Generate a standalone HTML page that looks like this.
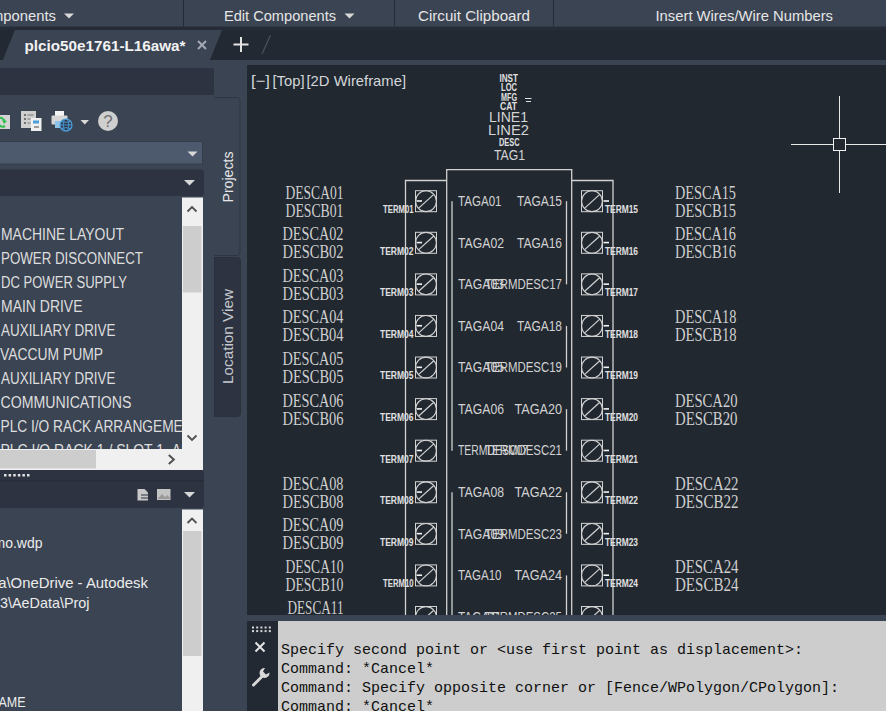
<!DOCTYPE html>
<html lang="en"><head><meta charset="utf-8"><title>AutoCAD Electrical - plcio50e1761-L16awa</title>
<style>
html,body{margin:0;padding:0;}
body{width:886px;height:711px;overflow:hidden;background:#3b4453;position:relative;font-family:"Liberation Sans", sans-serif;}
.abs{position:absolute;}
svg{position:absolute;left:0;top:0;display:block;}
svg text{font-family:"Liberation Sans", sans-serif;white-space:pre;}
svg .serif text{font-family:"Liberation Serif", serif;}
svg .mono text{font-family:"Liberation Mono", monospace;}
.ribbon{left:0;top:0;width:886px;height:27px;background:#3b4453;}
.ribbon .sep{position:absolute;top:0;width:1px;height:26px;background:#252b36;}
.ribline{left:0;top:26px;width:886px;height:4px;background:linear-gradient(#303846 0,#303846 1px,#252c37 1px,#252c37 4px);}
.tabs{left:0;top:30px;width:886px;height:30px;background:#222933;}
.palette{left:0;top:60px;width:247px;height:651px;background:#3b4453;}
.viewport{left:247px;top:65px;width:639px;height:550px;background:#212830;overflow:hidden;}
.cmd{left:247px;top:621px;width:639px;height:90px;background:#222933;}
.cmd .hist{position:absolute;left:31px;top:0;width:608px;height:90px;background:#cdcdcd;}
</style></head><body>

<div class="abs ribbon">
<div class="sep" style="left:183px"></div>
<div class="sep" style="left:394px"></div>
<div class="sep" style="left:553px"></div>
<svg width="886" height="27" viewBox="0 0 886 27"><text x="-69" y="21" font-size="15" fill="#e6e6e6" font-weight="normal" textLength="125" lengthAdjust="spacingAndGlyphs" >Insert Components</text><text x="224" y="21" font-size="15" fill="#e6e6e6" font-weight="normal" textLength="112" lengthAdjust="spacingAndGlyphs" >Edit Components</text><text x="418" y="21" font-size="15" fill="#e6e6e6" font-weight="normal" textLength="112" lengthAdjust="spacingAndGlyphs" >Circuit Clipboard</text><text x="655.5" y="21" font-size="15" fill="#e6e6e6" font-weight="normal" textLength="177.5" lengthAdjust="spacingAndGlyphs" >Insert Wires/Wire Numbers</text><path d="M64 13.5h10l-5 5z" fill="#d8d8d8"/><path d="M344.5 13.5h10l-5 5z" fill="#d8d8d8"/></svg>
</div>
<div class="abs ribline"></div>
<div class="abs tabs">
<svg width="886" height="30" viewBox="0 30 886 30"><polygon points="15,30 222,30 210,60 2.800,60" fill="#3b4453"/><text x="24.5" y="51" font-size="15" fill="#f2f2f2" font-weight="bold" textLength="161" lengthAdjust="spacingAndGlyphs" >plcio50e1761-L16awa*</text><path d="M198 41l8 8M206 41l-8 8" stroke="#a4a9b3" stroke-width="2" fill="none"/><path d="M233.5 44.5h15M241 37v15" stroke="#e4e4e4" stroke-width="2" fill="none"/><path d="M270.5 35L262 54" stroke="#4a5261" stroke-width="1.2" fill="none"/></svg>
</div>
<div class="abs palette">
<svg width="247" height="651" viewBox="0 60 247 651"><path d="M0 68h211a3 3 0 0 1 3 3v24h-214z" fill="#2d3340"/><path d="M214 97.5h23a3 3 0 0 1 3 3v152a3 3 0 0 1 -3 3h-23" fill="#3b4453" stroke="#2f3643" stroke-width="1"/><path d="M214.5 257.5h23a3 3 0 0 1 3 3v153a3 3 0 0 1 -3 3h-23z" fill="#2d3340" stroke="#2a303c" stroke-width="1"/><text transform="translate(232.5,202.5) rotate(-90)" font-size="14.5" fill="#e6e6e6" textLength="51" lengthAdjust="spacingAndGlyphs">Projects</text><text transform="translate(232.5,384) rotate(-90)" font-size="14.5" fill="#c6c9cf" textLength="95" lengthAdjust="spacingAndGlyphs">Location View</text><rect x="-6" y="115" width="16" height="14" fill="#d4d4d4"/><path d="M-1 118a5 5 0 0 1 6 4M5 126a5 5 0 0 1 -6 -1" stroke="#2fbf4f" stroke-width="2" fill="none"/><path d="M2 120l5 1-3 3z" fill="#2fbf4f"/><rect x="21" y="111" width="15" height="17" fill="#cfcfcf"/><path d="M24 115h2M24 119h2M24 123h2" stroke="#555" stroke-width="1.6"/><path d="M27.5 115h6M27.5 119h3M27.5 123h3" stroke="#777" stroke-width="1"/><rect x="31" y="118" width="10.5" height="13" fill="#f0f0f0"/><rect x="33" y="120.5" width="6" height="3" fill="#4d9fdc"/><path d="M34 127h5" stroke="#777" stroke-width="1.4"/><rect x="55" y="111" width="9" height="6" fill="#f4f4f4"/><rect x="51.5" y="115.500" width="16" height="9" rx="1" fill="#d6d6d6"/><rect x="55" y="121" width="8" height="7" fill="#8ec3ea"/><circle cx="66" cy="125" r="6" fill="#2c3a4e" stroke="#4d9fdc" stroke-width="1.2"/><path d="M60 125h12M61.500 121.500q4.500 1.800 9 0M61.500 128.500q4.500 -1.800 9 0" stroke="#4d9fdc" stroke-width="0.9" fill="none"/><ellipse cx="66" cy="125" rx="2.800" ry="6" fill="none" stroke="#4d9fdc" stroke-width="0.9"/><path d="M80.500 120h8.500l-4.250 4.500z" fill="#d8d8d8"/><circle cx="108" cy="121" r="10" fill="#cfcfcf"/><text x="108" y="127" font-size="17" fill="#707070" text-anchor="middle">?</text><rect x="-2" y="141.500" width="204.500" height="22.500" fill="#4d5a6e" stroke="#343c4a" stroke-width="1"/><path d="M187.5 151.500h10l-5 5z" fill="#d8d8d8"/><path d="M0 169.500h201a3 3 0 0 1 3 3v20.500a3 3 0 0 1 -3 3h-201z" fill="#2d3340"/><path d="M184 180h11l-5.500 5.500z" fill="#d8d8d8"/><rect x="182" y="197.500" width="21" height="272.500" fill="#f0f0f0"/><rect x="183" y="226" width="18.500" height="66.500" fill="#cdcdcd"/><path d="M187.5 211.500l4.500-4.500 4.500 4.500" stroke="#505050" stroke-width="1.8" fill="none"/><path d="M187.5 435.500l4.500 4.500 4.500-4.500" stroke="#505050" stroke-width="1.8" fill="none"/><rect x="0" y="449" width="182" height="21" fill="#f0f0f0"/><rect x="0" y="450" width="96" height="18.500" fill="#cdcdcd"/><path d="M168.800 455l5 4.500-5 4.500" stroke="#505050" stroke-width="2" fill="none"/><clipPath id="cl1"><rect x="0" y="197" width="182" height="252"/></clipPath><g clip-path="url(#cl1)"><text x="1" y="239.6" font-size="15.6" fill="#dedede" font-weight="normal" textLength="123" lengthAdjust="spacingAndGlyphs" >MACHINE LAYOUT</text><text x="1" y="263.6" font-size="15.6" fill="#dedede" font-weight="normal" textLength="142" lengthAdjust="spacingAndGlyphs" >POWER DISCONNECT</text><text x="1" y="287.6" font-size="15.6" fill="#dedede" font-weight="normal" textLength="126" lengthAdjust="spacingAndGlyphs" >DC POWER SUPPLY</text><text x="1" y="311.6" font-size="15.6" fill="#dedede" font-weight="normal" textLength="81.5" lengthAdjust="spacingAndGlyphs" >MAIN DRIVE</text><text x="1" y="335.6" font-size="15.6" fill="#dedede" font-weight="normal" textLength="114.5" lengthAdjust="spacingAndGlyphs" >AUXILIARY DRIVE</text><text x="0" y="359.6" font-size="15.6" fill="#dedede" font-weight="normal" textLength="103" lengthAdjust="spacingAndGlyphs" >VACCUM PUMP</text><text x="1" y="383.6" font-size="15.6" fill="#dedede" font-weight="normal" textLength="114.5" lengthAdjust="spacingAndGlyphs" >AUXILIARY DRIVE</text><text x="0.5" y="407.6" font-size="15.6" fill="#dedede" font-weight="normal" textLength="131" lengthAdjust="spacingAndGlyphs" >COMMUNICATIONS</text><text x="0.5" y="431.6" font-size="15.6" fill="#dedede" font-weight="normal" textLength="200.5" lengthAdjust="spacingAndGlyphs" >PLC I/O RACK ARRANGEMENT</text><text x="0.5" y="455.6" font-size="15.6" fill="#dedede" font-weight="normal" textLength="229.5" lengthAdjust="spacingAndGlyphs" >PLC I/O RACK 1 / SLOT 1- ANALOG</text></g><path d="M0 470h201a3 3 0 0 1 3 3v32a3 3 0 0 1 -3 3h-201z" fill="#2d3340"/><rect x="0" y="480.300" width="204" height="1.200" fill="#262c37"/><rect x="4" y="474" width="2.500" height="2.500" fill="#e4e4e4"/><rect x="8.6" y="474" width="2.500" height="2.500" fill="#e4e4e4"/><rect x="13.2" y="474" width="2.500" height="2.500" fill="#e4e4e4"/><rect x="17.8" y="474" width="2.500" height="2.500" fill="#e4e4e4"/><rect x="22.4" y="474" width="2.500" height="2.500" fill="#e4e4e4"/><rect x="27" y="474" width="2.500" height="2.500" fill="#e4e4e4"/><path d="M137.500 489h7l3.500 3.500v8h-10.500z" fill="#c8c8c8"/><path d="M141 495h7M141 498h7" stroke="#2d3340" stroke-width="1"/><rect x="157" y="489" width="13.500" height="11" fill="#c4c4c4"/><path d="M157.500 499l4.500-5 3 3 2.500-2 3 4z" fill="#9a9a9a"/><path d="M184 492h11l-5.500 5.500z" fill="#d8d8d8"/><rect x="182" y="509.500" width="21" height="202" fill="#f0f0f0"/><rect x="183" y="531" width="18.500" height="125" fill="#cdcdcd"/><path d="M187.5 523l4.500-4.500 4.500 4.500" stroke="#505050" stroke-width="1.8" fill="none"/><clipPath id="cl2"><rect x="0" y="509" width="182" height="202"/></clipPath><g clip-path="url(#cl2)"><text x="-22" y="548" font-size="15" fill="#ececec" font-weight="normal" textLength="64.5" lengthAdjust="spacingAndGlyphs" >demo.wdp</text><text x="-25" y="587.5" font-size="15" fill="#ececec" font-weight="normal" textLength="173" lengthAdjust="spacingAndGlyphs" >Data\OneDrive - Autodesk</text><text x="-24" y="607.5" font-size="15" fill="#ececec" font-weight="normal" textLength="113.5" lengthAdjust="spacingAndGlyphs" >2023\AeData\Proj</text><text x="-37" y="707" font-size="15" fill="#ececec" font-weight="normal" textLength="62.5" lengthAdjust="spacingAndGlyphs" >FILENAME</text></g></svg>
</div>
<div class="abs viewport">
<svg width="639" height="550" viewBox="247 65 639 550"><text x="251" y="86" font-size="15" fill="#d4d6da" font-weight="normal" textLength="19" lengthAdjust="spacingAndGlyphs" >[−]</text><text x="272.5" y="86" font-size="15" fill="#d4d6da" font-weight="normal" textLength="32" lengthAdjust="spacingAndGlyphs" >[Top]</text><text x="306.5" y="86" font-size="15" fill="#d4d6da" font-weight="normal" textLength="99.5" lengthAdjust="spacingAndGlyphs" >[2D Wireframe]</text><path d="M839.5 96v97M791 144.500h96" stroke="#e8e8e8" stroke-width="1" fill="none"/><rect x="833.500" y="138.500" width="12" height="12" fill="#212830" stroke="#f0f0f0" stroke-width="1"/><g><text x="499.5" y="82" font-size="10.8" fill="#e0e0e0" font-weight="bold" textLength="18.5" lengthAdjust="spacingAndGlyphs" >INST</text><text x="501" y="90.5" font-size="10.8" fill="#e0e0e0" font-weight="bold" textLength="16" lengthAdjust="spacingAndGlyphs" >LOC</text><text x="501" y="101" font-size="10.8" fill="#e0e0e0" font-weight="bold" textLength="16" lengthAdjust="spacingAndGlyphs" >MFG</text><text x="500" y="110" font-size="10.8" fill="#e0e0e0" font-weight="bold" textLength="17" lengthAdjust="spacingAndGlyphs" >CAT</text><path d="M525 98.500h6.500M526 101.500h5" stroke="#e0e0e0" stroke-width="1"/><text x="489" y="122" font-size="14" fill="#d4d4d4" font-weight="normal" textLength="39" lengthAdjust="spacingAndGlyphs" >LINE1</text><text x="488" y="134.5" font-size="14" fill="#d4d4d4" font-weight="normal" textLength="41" lengthAdjust="spacingAndGlyphs" >LINE2</text><text x="499" y="145.5" font-size="10.8" fill="#e0e0e0" font-weight="bold" textLength="20.5" lengthAdjust="spacingAndGlyphs" >DESC</text><text x="494" y="159.5" font-size="14.5" fill="#d4d4d4" font-weight="normal" textLength="31" lengthAdjust="spacingAndGlyphs" >TAG1</text></g><path d="M446.700 620V169.700h125V620" stroke="#d2d2d2" stroke-width="1.300" fill="none"/><path d="M405.500 620V180.500h41M571.500 180.500h41.500V620" stroke="#d2d2d2" stroke-width="1.300" fill="none"/><path d="M452 201.20V450.68" stroke="#d2d2d2" stroke-width="1.300"/><path d="M452 492.26V625.32" stroke="#d2d2d2" stroke-width="1.300"/><path d="M566.500 201.20V284.36" stroke="#d2d2d2" stroke-width="1.300"/><path d="M566.500 325.94V367.52" stroke="#d2d2d2" stroke-width="1.300"/><path d="M566.500 409.10V450.68" stroke="#d2d2d2" stroke-width="1.300"/><path d="M566.500 492.26V533.84" stroke="#d2d2d2" stroke-width="1.300"/><path d="M566.500 575.42V625.32" stroke="#d2d2d2" stroke-width="1.300"/><rect x="415.5" y="190.7" width="21" height="21" fill="none" stroke="#d2d2d2" stroke-width="1"/><circle cx="426" cy="201.2" r="10.400" fill="none" stroke="#d2d2d2" stroke-width="1.1"/><path d="M418.7 208.1L433.8 194.4" stroke="#d2d2d2" stroke-width="1.2"/><path d="M416.5 201h5.500" stroke="#f4f4f4" stroke-width="1.600"/><rect x="581.5" y="190.7" width="21" height="21" fill="none" stroke="#d2d2d2" stroke-width="1"/><circle cx="592" cy="201.2" r="10.400" fill="none" stroke="#d2d2d2" stroke-width="1.1"/><path d="M584.7 208.1L599.8 194.4" stroke="#d2d2d2" stroke-width="1.2"/><path d="M603.5 201h5.500" stroke="#f4f4f4" stroke-width="1.600"/><rect x="415.5" y="232.28" width="21" height="21" fill="none" stroke="#d2d2d2" stroke-width="1"/><circle cx="426" cy="242.78" r="10.400" fill="none" stroke="#d2d2d2" stroke-width="1.1"/><path d="M418.7 249.68L433.8 235.98" stroke="#d2d2d2" stroke-width="1.2"/><path d="M416.5 242.58h5.500" stroke="#f4f4f4" stroke-width="1.600"/><rect x="581.5" y="232.28" width="21" height="21" fill="none" stroke="#d2d2d2" stroke-width="1"/><circle cx="592" cy="242.78" r="10.400" fill="none" stroke="#d2d2d2" stroke-width="1.1"/><path d="M584.7 249.68L599.8 235.98" stroke="#d2d2d2" stroke-width="1.2"/><path d="M603.5 242.58h5.500" stroke="#f4f4f4" stroke-width="1.600"/><rect x="415.5" y="273.86" width="21" height="21" fill="none" stroke="#d2d2d2" stroke-width="1"/><circle cx="426" cy="284.36" r="10.400" fill="none" stroke="#d2d2d2" stroke-width="1.1"/><path d="M418.7 291.26L433.8 277.56" stroke="#d2d2d2" stroke-width="1.2"/><path d="M416.5 284.16h5.500" stroke="#f4f4f4" stroke-width="1.600"/><rect x="581.5" y="273.86" width="21" height="21" fill="none" stroke="#d2d2d2" stroke-width="1"/><circle cx="592" cy="284.36" r="10.400" fill="none" stroke="#d2d2d2" stroke-width="1.1"/><path d="M584.7 291.26L599.8 277.56" stroke="#d2d2d2" stroke-width="1.2"/><path d="M603.5 284.16h5.500" stroke="#f4f4f4" stroke-width="1.600"/><rect x="415.5" y="315.44" width="21" height="21" fill="none" stroke="#d2d2d2" stroke-width="1"/><circle cx="426" cy="325.94" r="10.400" fill="none" stroke="#d2d2d2" stroke-width="1.1"/><path d="M418.7 332.84L433.8 319.14" stroke="#d2d2d2" stroke-width="1.2"/><path d="M416.5 325.74h5.500" stroke="#f4f4f4" stroke-width="1.600"/><rect x="581.5" y="315.44" width="21" height="21" fill="none" stroke="#d2d2d2" stroke-width="1"/><circle cx="592" cy="325.94" r="10.400" fill="none" stroke="#d2d2d2" stroke-width="1.1"/><path d="M584.7 332.84L599.8 319.14" stroke="#d2d2d2" stroke-width="1.2"/><path d="M603.5 325.74h5.500" stroke="#f4f4f4" stroke-width="1.600"/><rect x="415.5" y="357.02" width="21" height="21" fill="none" stroke="#d2d2d2" stroke-width="1"/><circle cx="426" cy="367.52" r="10.400" fill="none" stroke="#d2d2d2" stroke-width="1.1"/><path d="M418.7 374.42L433.8 360.72" stroke="#d2d2d2" stroke-width="1.2"/><path d="M416.5 367.32h5.500" stroke="#f4f4f4" stroke-width="1.600"/><rect x="581.5" y="357.02" width="21" height="21" fill="none" stroke="#d2d2d2" stroke-width="1"/><circle cx="592" cy="367.52" r="10.400" fill="none" stroke="#d2d2d2" stroke-width="1.1"/><path d="M584.7 374.42L599.8 360.72" stroke="#d2d2d2" stroke-width="1.2"/><path d="M603.5 367.32h5.500" stroke="#f4f4f4" stroke-width="1.600"/><rect x="415.5" y="398.6" width="21" height="21" fill="none" stroke="#d2d2d2" stroke-width="1"/><circle cx="426" cy="409.1" r="10.400" fill="none" stroke="#d2d2d2" stroke-width="1.1"/><path d="M418.7 416L433.8 402.3" stroke="#d2d2d2" stroke-width="1.2"/><path d="M416.5 408.9h5.500" stroke="#f4f4f4" stroke-width="1.600"/><rect x="581.5" y="398.6" width="21" height="21" fill="none" stroke="#d2d2d2" stroke-width="1"/><circle cx="592" cy="409.1" r="10.400" fill="none" stroke="#d2d2d2" stroke-width="1.1"/><path d="M584.7 416L599.8 402.3" stroke="#d2d2d2" stroke-width="1.2"/><path d="M603.5 408.9h5.500" stroke="#f4f4f4" stroke-width="1.600"/><rect x="415.5" y="440.18" width="21" height="21" fill="none" stroke="#d2d2d2" stroke-width="1"/><circle cx="426" cy="450.68" r="10.400" fill="none" stroke="#d2d2d2" stroke-width="1.1"/><path d="M418.7 457.58L433.8 443.88" stroke="#d2d2d2" stroke-width="1.2"/><path d="M416.5 450.48h5.500" stroke="#f4f4f4" stroke-width="1.600"/><rect x="581.5" y="440.18" width="21" height="21" fill="none" stroke="#d2d2d2" stroke-width="1"/><circle cx="592" cy="450.68" r="10.400" fill="none" stroke="#d2d2d2" stroke-width="1.1"/><path d="M584.7 457.58L599.8 443.88" stroke="#d2d2d2" stroke-width="1.2"/><path d="M603.5 450.48h5.500" stroke="#f4f4f4" stroke-width="1.600"/><rect x="415.5" y="481.76" width="21" height="21" fill="none" stroke="#d2d2d2" stroke-width="1"/><circle cx="426" cy="492.26" r="10.400" fill="none" stroke="#d2d2d2" stroke-width="1.1"/><path d="M418.7 499.16L433.8 485.46" stroke="#d2d2d2" stroke-width="1.2"/><path d="M416.5 492.06h5.500" stroke="#f4f4f4" stroke-width="1.600"/><rect x="581.5" y="481.76" width="21" height="21" fill="none" stroke="#d2d2d2" stroke-width="1"/><circle cx="592" cy="492.26" r="10.400" fill="none" stroke="#d2d2d2" stroke-width="1.1"/><path d="M584.7 499.16L599.8 485.46" stroke="#d2d2d2" stroke-width="1.2"/><path d="M603.5 492.06h5.500" stroke="#f4f4f4" stroke-width="1.600"/><rect x="415.5" y="523.34" width="21" height="21" fill="none" stroke="#d2d2d2" stroke-width="1"/><circle cx="426" cy="533.84" r="10.400" fill="none" stroke="#d2d2d2" stroke-width="1.1"/><path d="M418.7 540.74L433.8 527.04" stroke="#d2d2d2" stroke-width="1.2"/><path d="M416.5 533.64h5.500" stroke="#f4f4f4" stroke-width="1.600"/><rect x="581.5" y="523.34" width="21" height="21" fill="none" stroke="#d2d2d2" stroke-width="1"/><circle cx="592" cy="533.84" r="10.400" fill="none" stroke="#d2d2d2" stroke-width="1.1"/><path d="M584.7 540.74L599.8 527.04" stroke="#d2d2d2" stroke-width="1.2"/><path d="M603.5 533.64h5.500" stroke="#f4f4f4" stroke-width="1.600"/><rect x="415.5" y="564.92" width="21" height="21" fill="none" stroke="#d2d2d2" stroke-width="1"/><circle cx="426" cy="575.42" r="10.400" fill="none" stroke="#d2d2d2" stroke-width="1.1"/><path d="M418.7 582.32L433.8 568.62" stroke="#d2d2d2" stroke-width="1.2"/><path d="M416.5 575.22h5.500" stroke="#f4f4f4" stroke-width="1.600"/><rect x="581.5" y="564.92" width="21" height="21" fill="none" stroke="#d2d2d2" stroke-width="1"/><circle cx="592" cy="575.42" r="10.400" fill="none" stroke="#d2d2d2" stroke-width="1.1"/><path d="M584.7 582.32L599.8 568.62" stroke="#d2d2d2" stroke-width="1.2"/><path d="M603.5 575.22h5.500" stroke="#f4f4f4" stroke-width="1.600"/><rect x="415.5" y="606.5" width="21" height="21" fill="none" stroke="#d2d2d2" stroke-width="1"/><circle cx="426" cy="617" r="10.400" fill="none" stroke="#d2d2d2" stroke-width="1.1"/><path d="M418.7 623.9L433.8 610.2" stroke="#d2d2d2" stroke-width="1.2"/><path d="M416.5 616.8h5.500" stroke="#f4f4f4" stroke-width="1.600"/><rect x="581.5" y="606.5" width="21" height="21" fill="none" stroke="#d2d2d2" stroke-width="1"/><circle cx="592" cy="617" r="10.400" fill="none" stroke="#d2d2d2" stroke-width="1.1"/><path d="M584.7 623.9L599.8 610.2" stroke="#d2d2d2" stroke-width="1.2"/><path d="M603.5 616.8h5.500" stroke="#f4f4f4" stroke-width="1.600"/><g><text x="383" y="213.1" font-size="10" fill="#e0e0e0" font-weight="bold" textLength="30.5" lengthAdjust="spacingAndGlyphs" >TERM01</text><text x="605" y="213.1" font-size="10" fill="#e0e0e0" font-weight="bold" textLength="33" lengthAdjust="spacingAndGlyphs" >TERM15</text><text x="380" y="254.68" font-size="10" fill="#e0e0e0" font-weight="bold" textLength="33.5" lengthAdjust="spacingAndGlyphs" >TERM02</text><text x="605" y="254.68" font-size="10" fill="#e0e0e0" font-weight="bold" textLength="33" lengthAdjust="spacingAndGlyphs" >TERM16</text><text x="380" y="296.26" font-size="10" fill="#e0e0e0" font-weight="bold" textLength="33.5" lengthAdjust="spacingAndGlyphs" >TERM03</text><text x="605" y="296.26" font-size="10" fill="#e0e0e0" font-weight="bold" textLength="33" lengthAdjust="spacingAndGlyphs" >TERM17</text><text x="380" y="337.84" font-size="10" fill="#e0e0e0" font-weight="bold" textLength="33.5" lengthAdjust="spacingAndGlyphs" >TERM04</text><text x="605" y="337.84" font-size="10" fill="#e0e0e0" font-weight="bold" textLength="33" lengthAdjust="spacingAndGlyphs" >TERM18</text><text x="380" y="379.42" font-size="10" fill="#e0e0e0" font-weight="bold" textLength="33.5" lengthAdjust="spacingAndGlyphs" >TERM05</text><text x="605" y="379.42" font-size="10" fill="#e0e0e0" font-weight="bold" textLength="33" lengthAdjust="spacingAndGlyphs" >TERM19</text><text x="380" y="421" font-size="10" fill="#e0e0e0" font-weight="bold" textLength="33.5" lengthAdjust="spacingAndGlyphs" >TERM06</text><text x="605" y="421" font-size="10" fill="#e0e0e0" font-weight="bold" textLength="33" lengthAdjust="spacingAndGlyphs" >TERM20</text><text x="380" y="462.58" font-size="10" fill="#e0e0e0" font-weight="bold" textLength="33.5" lengthAdjust="spacingAndGlyphs" >TERM07</text><text x="605" y="462.58" font-size="10" fill="#e0e0e0" font-weight="bold" textLength="33" lengthAdjust="spacingAndGlyphs" >TERM21</text><text x="380" y="504.16" font-size="10" fill="#e0e0e0" font-weight="bold" textLength="33.5" lengthAdjust="spacingAndGlyphs" >TERM08</text><text x="605" y="504.16" font-size="10" fill="#e0e0e0" font-weight="bold" textLength="33" lengthAdjust="spacingAndGlyphs" >TERM22</text><text x="380" y="545.74" font-size="10" fill="#e0e0e0" font-weight="bold" textLength="33.5" lengthAdjust="spacingAndGlyphs" >TERM09</text><text x="605" y="545.74" font-size="10" fill="#e0e0e0" font-weight="bold" textLength="33" lengthAdjust="spacingAndGlyphs" >TERM23</text><text x="383" y="587.32" font-size="10" fill="#e0e0e0" font-weight="bold" textLength="30.5" lengthAdjust="spacingAndGlyphs" >TERM10</text><text x="605" y="587.32" font-size="10" fill="#e0e0e0" font-weight="bold" textLength="33" lengthAdjust="spacingAndGlyphs" >TERM24</text><text x="383" y="628.9" font-size="10" fill="#e0e0e0" font-weight="bold" textLength="30.5" lengthAdjust="spacingAndGlyphs" >TERM11</text><text x="605" y="628.9" font-size="10" fill="#e0e0e0" font-weight="bold" textLength="33" lengthAdjust="spacingAndGlyphs" >TERM25</text></g><text x="458" y="206" font-size="14.2" fill="#d2d2d2" font-weight="normal" textLength="43.5" lengthAdjust="spacingAndGlyphs" >TAGA01</text><text x="517" y="206" font-size="14.2" fill="#d2d2d2" font-weight="normal" textLength="45" lengthAdjust="spacingAndGlyphs" >TAGA15</text><text x="458" y="247.58" font-size="14.2" fill="#d2d2d2" font-weight="normal" textLength="46" lengthAdjust="spacingAndGlyphs" >TAGA02</text><text x="517" y="247.58" font-size="14.2" fill="#d2d2d2" font-weight="normal" textLength="45" lengthAdjust="spacingAndGlyphs" >TAGA16</text><text x="458" y="289.16" font-size="14.2" fill="#d2d2d2" font-weight="normal" textLength="46" lengthAdjust="spacingAndGlyphs" >TAGA03</text><text x="485" y="289.16" font-size="14.2" fill="#d2d2d2" font-weight="normal" textLength="77" lengthAdjust="spacingAndGlyphs" >TERMDESC17</text><text x="458" y="330.74" font-size="14.2" fill="#d2d2d2" font-weight="normal" textLength="46" lengthAdjust="spacingAndGlyphs" >TAGA04</text><text x="517" y="330.74" font-size="14.2" fill="#d2d2d2" font-weight="normal" textLength="45" lengthAdjust="spacingAndGlyphs" >TAGA18</text><text x="458" y="372.32" font-size="14.2" fill="#d2d2d2" font-weight="normal" textLength="46" lengthAdjust="spacingAndGlyphs" >TAGA05</text><text x="485" y="372.32" font-size="14.2" fill="#d2d2d2" font-weight="normal" textLength="77" lengthAdjust="spacingAndGlyphs" >TERMDESC19</text><text x="458" y="413.9" font-size="14.2" fill="#d2d2d2" font-weight="normal" textLength="46" lengthAdjust="spacingAndGlyphs" >TAGA06</text><text x="514.5" y="413.9" font-size="14.2" fill="#d2d2d2" font-weight="normal" textLength="47.5" lengthAdjust="spacingAndGlyphs" >TAGA20</text><text x="458" y="455.48" font-size="14.2" fill="#d2d2d2" font-weight="normal" textLength="70" lengthAdjust="spacingAndGlyphs" >TERMDESC07</text><text x="485" y="455.48" font-size="14.2" fill="#d2d2d2" font-weight="normal" textLength="77" lengthAdjust="spacingAndGlyphs" >TERMDESC21</text><text x="458" y="497.06" font-size="14.2" fill="#d2d2d2" font-weight="normal" textLength="46" lengthAdjust="spacingAndGlyphs" >TAGA08</text><text x="514.5" y="497.06" font-size="14.2" fill="#d2d2d2" font-weight="normal" textLength="47.5" lengthAdjust="spacingAndGlyphs" >TAGA22</text><text x="458" y="538.64" font-size="14.2" fill="#d2d2d2" font-weight="normal" textLength="46" lengthAdjust="spacingAndGlyphs" >TAGA09</text><text x="485" y="538.64" font-size="14.2" fill="#d2d2d2" font-weight="normal" textLength="77" lengthAdjust="spacingAndGlyphs" >TERMDESC23</text><text x="458" y="580.22" font-size="14.2" fill="#d2d2d2" font-weight="normal" textLength="43.5" lengthAdjust="spacingAndGlyphs" >TAGA10</text><text x="514.5" y="580.22" font-size="14.2" fill="#d2d2d2" font-weight="normal" textLength="47.5" lengthAdjust="spacingAndGlyphs" >TAGA24</text><text x="458" y="621.8" font-size="14.2" fill="#d2d2d2" font-weight="normal" textLength="43.5" lengthAdjust="spacingAndGlyphs" >TAGA11</text><text x="485" y="621.8" font-size="14.2" fill="#d2d2d2" font-weight="normal" textLength="77" lengthAdjust="spacingAndGlyphs" >TERMDESC25</text><g class="serif"><text x="285.5" y="199" font-size="18" fill="#cfcfcf" font-weight="normal" textLength="58" lengthAdjust="spacingAndGlyphs" >DESCA01</text><text x="285.5" y="217" font-size="18" fill="#cfcfcf" font-weight="normal" textLength="58" lengthAdjust="spacingAndGlyphs" >DESCB01</text><text x="282.5" y="240" font-size="18" fill="#cfcfcf" font-weight="normal" textLength="61" lengthAdjust="spacingAndGlyphs" >DESCA02</text><text x="282.5" y="258" font-size="18" fill="#cfcfcf" font-weight="normal" textLength="61" lengthAdjust="spacingAndGlyphs" >DESCB02</text><text x="282.5" y="282" font-size="18" fill="#cfcfcf" font-weight="normal" textLength="61" lengthAdjust="spacingAndGlyphs" >DESCA03</text><text x="282.5" y="300" font-size="18" fill="#cfcfcf" font-weight="normal" textLength="61" lengthAdjust="spacingAndGlyphs" >DESCB03</text><text x="282.5" y="323" font-size="18" fill="#cfcfcf" font-weight="normal" textLength="61" lengthAdjust="spacingAndGlyphs" >DESCA04</text><text x="282.5" y="341" font-size="18" fill="#cfcfcf" font-weight="normal" textLength="61" lengthAdjust="spacingAndGlyphs" >DESCB04</text><text x="282.5" y="365" font-size="18" fill="#cfcfcf" font-weight="normal" textLength="61" lengthAdjust="spacingAndGlyphs" >DESCA05</text><text x="282.5" y="383" font-size="18" fill="#cfcfcf" font-weight="normal" textLength="61" lengthAdjust="spacingAndGlyphs" >DESCB05</text><text x="282.5" y="407" font-size="18" fill="#cfcfcf" font-weight="normal" textLength="61" lengthAdjust="spacingAndGlyphs" >DESCA06</text><text x="282.5" y="425" font-size="18" fill="#cfcfcf" font-weight="normal" textLength="61" lengthAdjust="spacingAndGlyphs" >DESCB06</text><text x="282.5" y="490" font-size="18" fill="#cfcfcf" font-weight="normal" textLength="61" lengthAdjust="spacingAndGlyphs" >DESCA08</text><text x="282.5" y="508" font-size="18" fill="#cfcfcf" font-weight="normal" textLength="61" lengthAdjust="spacingAndGlyphs" >DESCB08</text><text x="282.5" y="531" font-size="18" fill="#cfcfcf" font-weight="normal" textLength="61" lengthAdjust="spacingAndGlyphs" >DESCA09</text><text x="282.5" y="549" font-size="18" fill="#cfcfcf" font-weight="normal" textLength="61" lengthAdjust="spacingAndGlyphs" >DESCB09</text><text x="285.5" y="573" font-size="18" fill="#cfcfcf" font-weight="normal" textLength="58" lengthAdjust="spacingAndGlyphs" >DESCA10</text><text x="285.5" y="591" font-size="18" fill="#cfcfcf" font-weight="normal" textLength="58" lengthAdjust="spacingAndGlyphs" >DESCB10</text><text x="287.5" y="614" font-size="18" fill="#cfcfcf" font-weight="normal" textLength="56" lengthAdjust="spacingAndGlyphs" >DESCA11</text><text x="287.5" y="632" font-size="18" fill="#cfcfcf" font-weight="normal" textLength="56" lengthAdjust="spacingAndGlyphs" >DESCB11</text><text x="675" y="199" font-size="18" fill="#cfcfcf" font-weight="normal" textLength="61" lengthAdjust="spacingAndGlyphs" >DESCA15</text><text x="675" y="217" font-size="18" fill="#cfcfcf" font-weight="normal" textLength="61" lengthAdjust="spacingAndGlyphs" >DESCB15</text><text x="675" y="240" font-size="18" fill="#cfcfcf" font-weight="normal" textLength="61" lengthAdjust="spacingAndGlyphs" >DESCA16</text><text x="675" y="258" font-size="18" fill="#cfcfcf" font-weight="normal" textLength="61" lengthAdjust="spacingAndGlyphs" >DESCB16</text><text x="675" y="323" font-size="18" fill="#cfcfcf" font-weight="normal" textLength="61.5" lengthAdjust="spacingAndGlyphs" >DESCA18</text><text x="675" y="341" font-size="18" fill="#cfcfcf" font-weight="normal" textLength="61.5" lengthAdjust="spacingAndGlyphs" >DESCB18</text><text x="675" y="407" font-size="18" fill="#cfcfcf" font-weight="normal" textLength="62.5" lengthAdjust="spacingAndGlyphs" >DESCA20</text><text x="675" y="425" font-size="18" fill="#cfcfcf" font-weight="normal" textLength="62.5" lengthAdjust="spacingAndGlyphs" >DESCB20</text><text x="675" y="490" font-size="18" fill="#cfcfcf" font-weight="normal" textLength="63.5" lengthAdjust="spacingAndGlyphs" >DESCA22</text><text x="675" y="508" font-size="18" fill="#cfcfcf" font-weight="normal" textLength="63.5" lengthAdjust="spacingAndGlyphs" >DESCB22</text><text x="675" y="573" font-size="18" fill="#cfcfcf" font-weight="normal" textLength="63.5" lengthAdjust="spacingAndGlyphs" >DESCA24</text><text x="675" y="591" font-size="18" fill="#cfcfcf" font-weight="normal" textLength="63.5" lengthAdjust="spacingAndGlyphs" >DESCB24</text></g></svg>
</div>
<div class="abs cmd"><div class="hist"></div>
<svg width="639" height="90" viewBox="247 621 639 90"><rect x="252" y="626.5" width="2" height="2" fill="#d8d8d8"/><rect x="252" y="630.1" width="2" height="2" fill="#d8d8d8"/><rect x="256.2" y="626.5" width="2" height="2" fill="#d8d8d8"/><rect x="256.2" y="630.1" width="2" height="2" fill="#d8d8d8"/><rect x="260.4" y="626.5" width="2" height="2" fill="#d8d8d8"/><rect x="260.4" y="630.1" width="2" height="2" fill="#d8d8d8"/><rect x="264.6" y="626.5" width="2" height="2" fill="#d8d8d8"/><rect x="264.6" y="630.1" width="2" height="2" fill="#d8d8d8"/><rect x="268.8" y="626.5" width="2" height="2" fill="#d8d8d8"/><rect x="268.8" y="630.1" width="2" height="2" fill="#d8d8d8"/><path d="M255.500 642.500l9 9M264.500 642.500l-9 9" stroke="#e4e4e4" stroke-width="2" fill="none"/><path d="M253.500 685l9.500-9.500" stroke="#d8d8d8" stroke-width="3" stroke-linecap="round" fill="none"/><path d="M269.500 672.500a5 5 0 1 1 -4.500 -4.500l-2 3.500 3 3z" fill="#d8d8d8"/><g class="mono"><text x="281" y="654" font-size="15" fill="#101010" font-weight="normal" textLength="522" lengthAdjust="spacingAndGlyphs" >Specify second point or &lt;use first point as displacement&gt;:</text><text x="281" y="673" font-size="15" fill="#101010" font-weight="normal" textLength="153" lengthAdjust="spacingAndGlyphs" >Command: *Cancel*</text><text x="281" y="692" font-size="15" fill="#101010" font-weight="normal" textLength="558" lengthAdjust="spacingAndGlyphs" >Command: Specify opposite corner or [Fence/WPolygon/CPolygon]:</text><text x="281" y="711" font-size="15" fill="#101010" font-weight="normal" textLength="153" lengthAdjust="spacingAndGlyphs" >Command: *Cancel*</text></g></svg>
</div>
</body></html>
